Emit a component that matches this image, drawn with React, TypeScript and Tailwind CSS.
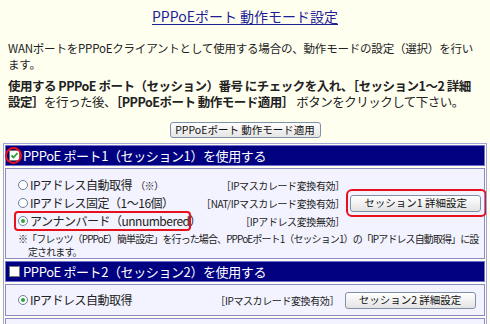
import React from "react";

const Radio = ({ checked }: { checked?: boolean }) => (
  <span className="inline-flex items-center justify-center w-[10px] h-[10px] rounded-full border border-[#6b7f9c] bg-white mr-[2px] shrink-0">
    {checked && <span className="w-[4px] h-[4px] rounded-full bg-[#2fa23a]" />}
  </span>
);

const DetailButton = ({ label }: { label: string }) => (
  <button className="w-[131px] h-[17px] rounded-[3px] border border-[#7f8fa8] bg-gradient-to-b from-white to-[#e4e4e4] text-[10.5px] leading-none text-[#111] whitespace-nowrap">
    {label}
  </button>
);

export default function App() {
  return (
    <div className="w-[490px] h-[324px] overflow-hidden bg-[#fffff0] text-[#222] font-['Noto_Sans_CJK_JP',sans-serif]">
      <div className="pt-[7px] text-center text-[14px] leading-[18px]">
        <span className="text-[#1e1e96] underline underline-offset-2">PPPoEポート 動作モード設定</span>
      </div>

      <p className="mt-[15px] px-[8px] text-[11.5px] leading-[16px] tracking-[-0.2px] whitespace-nowrap">
        WANポートをPPPoEクライアントとして使用する場合の、動作モードの設定（選択）を行い
        <br />
        ます。
      </p>

      <p className="mt-[6px] px-[8px] text-[12.5px] leading-[16px] tracking-[-0.5px] whitespace-nowrap">
        <b>使用する PPPoE ポート（セッション）番号 にチェックを入れ、［セッション1～2 詳細</b>
        <br />
        <b>設定］</b>を行った後、<b>［PPPoEポート 動作モード適用］</b> ボタンをクリックして下さい。
      </p>

      <div className="mt-[12px] flex justify-center leading-none">
        <button className="w-[151px] h-[16px] rounded-[3px] border border-[#7f8fa8] bg-gradient-to-b from-white to-[#e4e4e4] text-[10.5px] leading-none text-[#111] whitespace-nowrap">
          PPPoEポート 動作モード適用
        </button>
      </div>

      <div className="w-[484px] mx-[3px] mt-[5px] border border-[#a3a3d8] p-px flex flex-col gap-[2px] overflow-hidden">
        {/* Session 1 */}
        <div className="relative h-[21px] bg-[#000080] border border-[#7070d0] flex items-center pl-[3px] text-white text-[13px] tracking-[-0.4px] whitespace-nowrap">
          <span className="w-[11px] h-[11px] bg-white border border-[#777] flex items-center justify-center mr-[3px]">
            <svg width="9" height="9" viewBox="0 0 9 9">
              <path d="M1.5 4.5 L3.5 6.5 L7.5 2" stroke="#21a336" strokeWidth="1.8" fill="none" />
            </svg>
          </span>
          PPPoE ポート1（セッション1）を使用する
          <span className="absolute left-[-1px] top-[1px] w-[17px] h-[17px] rounded-full border-2 border-[#e8101a]" />
        </div>
        <div className="min-w-0 bg-[#f3f3ff] border border-[#8a8ac8] pt-[7px] pb-0 pl-[12px] pr-[3px]">
          <div className="grid grid-cols-[1fr_auto_142px] items-center whitespace-nowrap">
            <div className="h-[18px] flex items-center text-[12px] tracking-[-0.5px]">
              <Radio />IPアドレス自動取得<span className="text-[10px] ml-[3px]">（※）</span>
            </div>
            <div className="text-[10px] tracking-[-0.4px] text-right">［IPマスカレード変換有効］</div>
            <div />
            <div className="h-[18px] flex items-center text-[12px] tracking-[-0.5px]">
              <Radio />IPアドレス固定（1～16個）
            </div>
            <div className="text-[10px] tracking-[-0.4px] text-right">［NAT/IPマスカレード変換有効］</div>
            <div className="relative flex justify-center">
              <DetailButton label="セッション1 詳細設定" />
              <span className="absolute left-[1px] top-[-6px] w-[141px] h-[28px] rounded-[6px] border-2 border-[#e8101a]" />
            </div>
            <div className="relative h-[18px] flex items-center text-[12px] tracking-[-0.5px]">
              <Radio checked />アンナンバード（unnumbered）
              <span className="absolute left-[-4px] top-[-1px] w-[177px] h-[20px] rounded-[4px] border-2 border-[#e8101a]" />
            </div>
            <div className="text-[10px] tracking-[-0.4px] text-right">［IPアドレス変換無効］</div>
            <div />
          </div>
          <p className="mt-[2px] text-[10px] leading-[13px] tracking-[-0.9px] whitespace-nowrap">
            ※「フレッツ（PPPoE）簡単設定」を行った場合、PPPoEポート1（セッション1）の「IPアドレス自動取得」に設
            <br />
            <span className="pl-[10px]">定されます。</span>
          </p>
        </div>

        {/* Session 2 */}
        <div className="h-[21px] bg-[#000080] border border-[#7070d0] flex items-center pl-[3px] text-white text-[13px] tracking-[-0.4px] whitespace-nowrap">
          <span className="w-[11px] h-[11px] bg-white border border-[#777] mr-[3px]" />
          PPPoE ポート2（セッション2）を使用する
        </div>
        <div className="min-w-0 bg-[#f3f3ff] border border-[#8a8ac8] pt-[6px] pb-[6px] pl-[12px] pr-[3px]">
          <div className="grid grid-cols-[1fr_auto_142px] items-center whitespace-nowrap">
            <div className="h-[18px] flex items-center text-[12px] tracking-[-0.5px]">
              <Radio checked />IPアドレス自動取得
            </div>
            <div className="text-[10px] tracking-[-0.4px] text-right">［IPマスカレード変換有効］</div>
            <div className="flex justify-center">
              <DetailButton label="セッション2 詳細設定" />
            </div>
          </div>
        </div>
        <div className="h-[20px] bg-[#f3f3ff] border border-[#8a8ac8]" />
      </div>
    </div>
  );
}
